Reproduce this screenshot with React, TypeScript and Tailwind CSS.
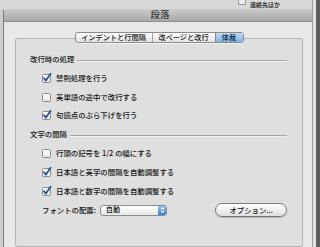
import React from "react";

const FONT = { fontFamily: '"Noto Sans CJK JP", "Noto Sans", sans-serif' };

function Check({ checked }: { checked?: boolean }) {
  return (
    <svg width="11" height="10" viewBox="0 0 11 10" className="shrink-0">
      <defs>
        <linearGradient id="cb" x1="0" y1="0" x2="0" y2="1">
          <stop offset="0" stopColor="#ffffff" />
          <stop offset="1" stopColor="#e4e4e4" />
        </linearGradient>
      </defs>
      <rect x="0.5" y="1.5" width="8" height="8" rx="1" fill="url(#cb)" stroke="#8c8c8c" />
      {checked && (
        <path d="M2 5.2 L3.9 7.6 L8.6 0.8" fill="none" stroke="#1f4f99" strokeWidth="1.7" strokeLinecap="round" strokeLinejoin="round" />
      )}
    </svg>
  );
}

function CheckRow({ label, checked, h }: { label: string; checked?: boolean; h: string }) {
  return (
    <div className={`flex items-center pl-[12px] gap-[3px] ${h}`}>
      <Check checked={checked} />
      <span className="text-[7.4px] leading-none font-medium text-[#151515]">{label}</span>
    </div>
  );
}

function Heading({ label, h }: { label: string; h: string }) {
  return (
    <div className={`flex items-center gap-[3px] ${h}`}>
      <span className="text-[7.4px] leading-none font-medium text-[#151515]">{label}</span>
      <div className="flex-1 mt-[3px] h-[2px] border-t border-t-[#a4a4a4] border-b border-b-[#f0f0f0]" />
    </div>
  );
}

export default function App() {
  return (
    <div className="w-[320px] h-[247px] overflow-hidden flex bg-[#d6d6d6]" style={FONT}>
      <div className="w-[4px] flex flex-col">
        <div className="h-[10px] bg-[#d6d6d6]" />
        <div className="flex-1 bg-[#cdcdcd] border-r border-r-[#7c7c7c]" />
      </div>
      <div className="w-[308px] flex flex-col">
        <div className="h-[9px] bg-[#d8d8d8] flex items-center pl-[234px] gap-[4px]">
          <div className="self-start w-[8px] h-[5px] border border-t-0 border-[#9a9a9a] bg-[#ececec]" />
          <span className="text-[6px] font-bold text-[#333] leading-[7px]">連絡先ほか</span>
        </div>
        <div className="h-[13px] bg-gradient-to-b from-[#cbcbcb] to-[#a9a9a9] border-b border-b-[#8f8f8f] flex items-center justify-center">
          <span className="text-[9.5px] leading-none text-[#1a1a1a] ml-[4px]">段落</span>
        </div>
        <div className="flex-1 bg-[#e8e8e8] pt-[10px] flex flex-col">
          <div className="flex justify-center relative z-10 pl-[2px]">
            <div className="flex h-[11px] rounded-[3px] border border-[#8a8a8a] overflow-hidden bg-gradient-to-b from-[#ffffff] to-[#e2e2e2] shadow-[0_1px_0_#f4f4f4]">
              <div className="w-[77px] flex items-center justify-center border-r border-r-[#a0a0a0] text-[7.2px] font-medium leading-none text-[#151515]">インデントと行間隔</div>
              <div className="w-[63px] flex items-center justify-center border-r border-r-[#8a8a8a] text-[7.2px] font-medium leading-none text-[#151515]">改ページと改行</div>
              <div className="w-[27px] flex items-center justify-center bg-gradient-to-b from-[#c3dcf5] to-[#7eb2e6] text-[7.2px] font-medium leading-none text-[#10243d]">体裁</div>
            </div>
          </div>
          <div className="-mt-[5px] ml-[11px] w-[288px] flex-1 border border-[#b4b4b4] rounded-[2px] bg-[#dfdfdf] pt-[11px] pl-[14px] pr-[15px] flex flex-col">
            <Heading label="改行時の処理" h="h-[18px]" />
            <CheckRow label="禁則処理を行う" checked h="h-[19px]" />
            <CheckRow label="英単語の途中で改行する" h="h-[19px]" />
            <CheckRow label="句読点のぶら下げを行う" checked h="h-[18px]" />
            <Heading label="文字の間隔" h="h-[20px]" />
            <CheckRow label="行頭の記号を 1/2 の幅にする" h="h-[18px]" />
            <CheckRow label="日本語と英字の間隔を自動調整する" checked h="h-[19px]" />
            <CheckRow label="日本語と数字の間隔を自動調整する" checked h="h-[19px]" />
            <div className="h-[20px] flex items-center pl-[12px]">
              <span className="text-[7.4px] leading-none font-medium text-[#151515] w-[58px]">フォントの配置:</span>
              <div className="w-[68px] h-[11px] rounded-[3px] border border-[#8c8c8c] bg-gradient-to-b from-[#ffffff] to-[#e6e6e6] flex items-center overflow-hidden">
                <span className="flex-1 pl-[5px] text-[7.2px] font-medium leading-none text-[#151515]">自動</span>
                <div className="w-[8px] h-full bg-gradient-to-b from-[#8fc0f0] to-[#3d82d6] flex items-center justify-center">
                  <svg width="5" height="8" viewBox="0 0 5 8">
                    <path d="M0.5 3.2 L2.5 1 L4.5 3.2 Z M0.5 4.8 L2.5 7 L4.5 4.8 Z" fill="#ffffff" />
                  </svg>
                </div>
              </div>
              <div className="ml-[48px] w-[72px] h-[14px] rounded-full border border-[#7a7a7a] bg-gradient-to-b from-[#ffffff] to-[#e0e0e0] shadow-[0_1px_1px_rgba(0,0,0,0.2)] flex items-center justify-center text-[7.4px] font-medium leading-none text-[#151515]">
                オプション...
              </div>
            </div>
          </div>
        </div>
      </div>
      <div className="w-[8px] flex">
        <div className="w-[1px] bg-[#9c9c9c]" />
        <div className="w-[3px] bg-[#e3e3e3]" />
        <div className="w-[4px] bg-[#5e5e5e]" />
      </div>
    </div>
  );
}
